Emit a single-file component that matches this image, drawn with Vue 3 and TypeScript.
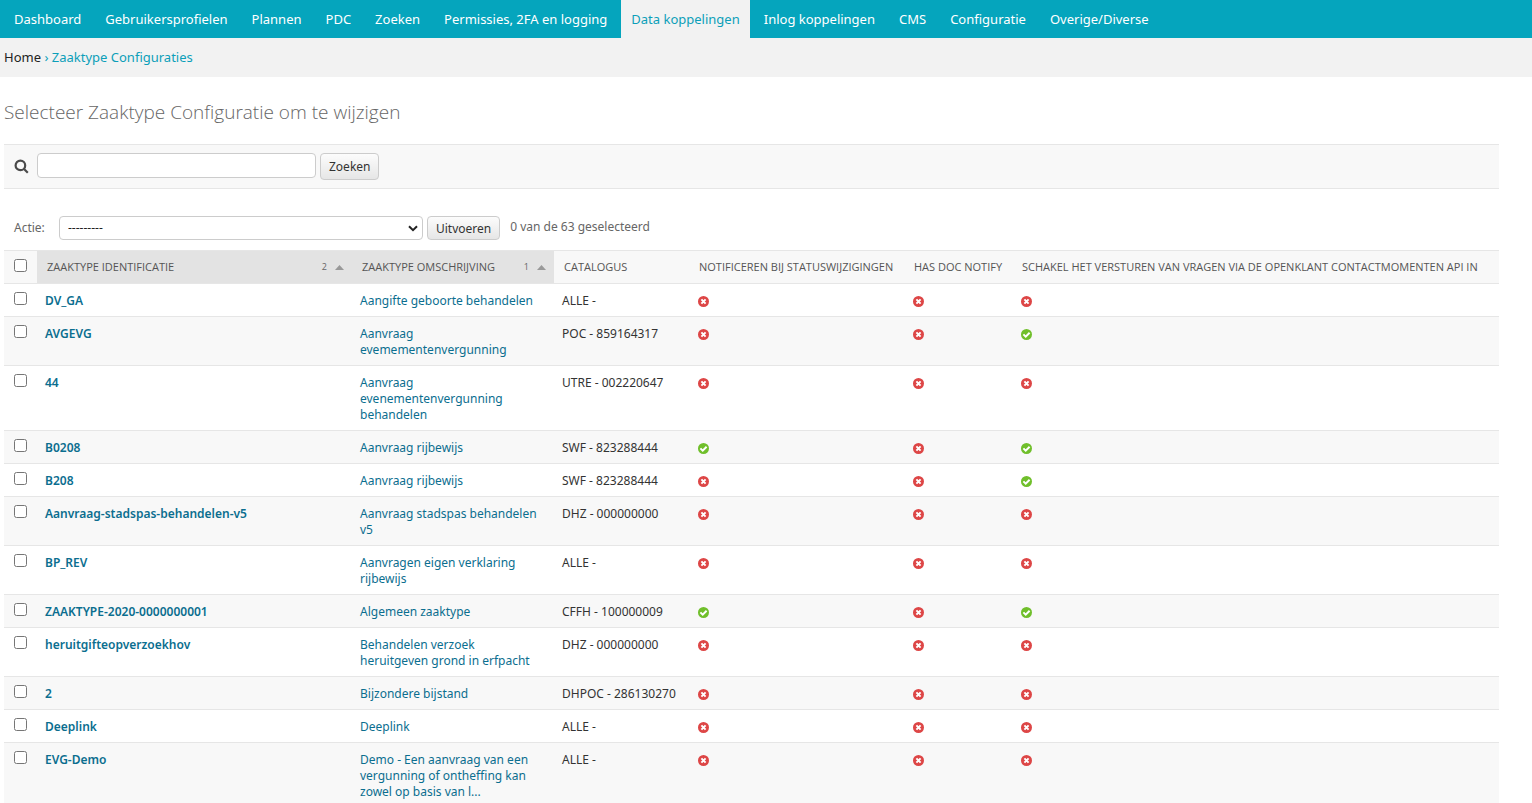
<script setup lang="ts">
import { computed, ref } from 'vue'

interface ZaaktypeRow {
  id: string
  description: string
  catalogus: string
  flags: [boolean, boolean, boolean]
}

const navItems: string[] = [
  'Dashboard',
  'Gebruikersprofielen',
  'Plannen',
  'PDC',
  'Zoeken',
  'Permissies, 2FA en logging',
  'Data koppelingen',
  'Inlog koppelingen',
  'CMS',
  'Configuratie',
  'Overige/Diverse',
]
const activeItem = 'Data koppelingen'

const flagColumns: string[] = [
  'Notificeren bij statuswijzigingen',
  'Has doc notify',
  'Schakel het versturen van vragen via de OpenKlant contactmomenten API in',
]

const rows: ZaaktypeRow[] = [
  { id: 'DV_GA', description: 'Aangifte geboorte behandelen', catalogus: 'ALLE -', flags: [false, false, false] },
  { id: 'AVGEVG', description: 'Aanvraag evemementenvergunning', catalogus: 'POC - 859164317', flags: [false, false, true] },
  { id: '44', description: 'Aanvraag evenementenvergunning behandelen', catalogus: 'UTRE - 002220647', flags: [false, false, false] },
  { id: 'B0208', description: 'Aanvraag rijbewijs', catalogus: 'SWF - 823288444', flags: [true, false, true] },
  { id: 'B208', description: 'Aanvraag rijbewijs', catalogus: 'SWF - 823288444', flags: [false, false, true] },
  { id: 'Aanvraag-stadspas-behandelen-v5', description: 'Aanvraag stadspas behandelen v5', catalogus: 'DHZ - 000000000', flags: [false, false, false] },
  { id: 'BP_REV', description: 'Aanvragen eigen verklaring rijbewijs', catalogus: 'ALLE -', flags: [false, false, false] },
  { id: 'ZAAKTYPE-2020-0000000001', description: 'Algemeen zaaktype', catalogus: 'CFFH - 100000009', flags: [true, false, true] },
  { id: 'heruitgifteopverzoekhov', description: 'Behandelen verzoek heruitgeven grond in erfpacht', catalogus: 'DHZ - 000000000', flags: [false, false, false] },
  { id: '2', description: 'Bijzondere bijstand', catalogus: 'DHPOC - 286130270', flags: [false, false, false] },
  { id: 'Deeplink', description: 'Deeplink', catalogus: 'ALLE -', flags: [false, false, false] },
  { id: 'EVG-Demo', description: 'Demo - Een aanvraag van een vergunning of ontheffing kan zowel op basis van l...', catalogus: 'ALLE -', flags: [false, false, false] },
]

const total = 63
const query = ref('')
const action = ref('')
const selected = ref<string[]>([])

const allSelected = computed<boolean>({
  get: () => selected.value.length === rows.length,
  set: (on) => {
    selected.value = on ? rows.map((row) => row.id) : []
  },
})
</script>

<template>
  <div class="page">
    <nav class="nav" aria-label="Hoofdmenu">
      <a v-for="item in navItems" :key="item" href="#" class="nav-link" :class="{ active: item === activeItem }">{{ item }}</a>
    </nav>

    <div class="breadcrumbs">
      <a href="#">Home</a> › Zaaktype Configuraties
    </div>

    <main class="content">
      <h1>Selecteer Zaaktype Configuratie om te wijzigen</h1>

      <form class="search" @submit.prevent>
        <label for="searchbar" aria-label="Zoeken">
          <svg class="search-icon" viewBox="0 0 15 15" aria-hidden="true">
            <circle cx="6.4" cy="6.4" r="4.8" />
            <path d="M9.8 9.8 L13.8 13.8" />
          </svg>
        </label>
        <input id="searchbar" v-model="query" type="text" />
        <button type="submit">Zoeken</button>
      </form>

      <form class="actions" @submit.prevent>
        <label for="action">Actie:</label>
        <div class="select-wrap">
          <select id="action" v-model="action">
            <option value="">---------</option>
          </select>
          <svg class="chevron" viewBox="0 0 10 7" aria-hidden="true"><path d="M1 1.2 L5 5.2 L9 1.2" /></svg>
        </div>
        <button type="submit">Uitvoeren</button>
        <span class="counter">{{ selected.length }} van de {{ total }} geselecteerd</span>
      </form>

      <table>
        <colgroup>
          <col class="c-check" />
          <col class="c-id" />
          <col class="c-desc" />
          <col class="c-cat" />
          <col class="c-status" />
          <col class="c-doc" />
          <col />
        </colgroup>
        <thead>
          <tr>
            <th class="check"><input v-model="allSelected" type="checkbox" aria-label="Alles selecteren" /></th>
            <th class="sorted">
              <div class="sort-head">
                <a href="#">Zaaktype identificatie</a>
                <span class="priority">2</span>
                <svg class="arrow" viewBox="0 0 9 5" aria-hidden="true"><path d="M0 5 L4.5 0 L9 5 Z" /></svg>
              </div>
            </th>
            <th class="sorted">
              <div class="sort-head">
                <a href="#">Zaaktype omschrijving</a>
                <span class="priority">1</span>
                <svg class="arrow" viewBox="0 0 9 5" aria-hidden="true"><path d="M0 5 L4.5 0 L9 5 Z" /></svg>
              </div>
            </th>
            <th><a href="#">Catalogus</a></th>
            <th v-for="column in flagColumns" :key="column"><a href="#">{{ column }}</a></th>
          </tr>
        </thead>
        <tbody>
          <tr v-for="row in rows" :key="row.id">
            <td class="check"><input v-model="selected" type="checkbox" :value="row.id" :aria-label="row.id" /></td>
            <th scope="row"><a href="#">{{ row.id }}</a></th>
            <td class="description"><a href="#">{{ row.description }}</a></td>
            <td>{{ row.catalogus }}</td>
            <td v-for="(flag, i) in row.flags" :key="i" class="flag-cell">
              <svg class="flag" viewBox="0 0 11 11" role="img" :aria-label="flag ? 'Ja' : 'Nee'">
                <circle cx="5.5" cy="5.5" r="5.5" :class="flag ? 'yes' : 'no'" />
                <path v-if="flag" d="M2.4 5.4 L4.7 7.6 L8.6 3.8" />
                <path v-else d="M3.4 3.4 L7.6 7.6 M7.6 3.4 L3.4 7.6" />
              </svg>
            </td>
          </tr>
        </tbody>
      </table>
    </main>
  </div>
</template>

<style>
body {
  margin: 0;
  background: #fff;
}
</style>

<style scoped>
.page {
  height: 100vh;
  overflow: hidden;
  font-family: "Segoe UI", "Noto Sans", "Open Sans", sans-serif;
  font-size: 12px;
  line-height: 16px;
  color: #333;
}
a {
  text-decoration: none;
  color: #0b6e8f;
}
.nav {
  display: flex;
  gap: 4px;
  padding: 0 4px;
  background: #05a5bd;
}
.nav-link {
  padding: 0 10px;
  font-size: 13px;
  line-height: 38px;
  color: #fff;
  white-space: nowrap;
}
.nav-link.active {
  background: #f2f2f2;
  color: #0c9fb9;
}
.breadcrumbs {
  padding: 0 4px;
  font-size: 13px;
  line-height: 39px;
  background: #f2f2f2;
  color: #0c9fb9;
}
.breadcrumbs a {
  color: #222;
}
.content {
  padding: 0 33px 0 4px;
}
h1 {
  margin: 0;
  padding: 23px 0 20px;
  font-family: "Segoe UI", "Open Sans", sans-serif;
  font-size: 19px;
  font-weight: 300;
  line-height: 24px;
  color: #666;
}
.search {
  display: flex;
  align-items: center;
  gap: 4px;
  padding: 8px 10px;
  border: solid #e6e6e6;
  border-width: 1px 0;
  background: #f8f8f8;
}
.search label {
  display: flex;
  margin-right: 4px;
}
.search-icon {
  width: 15px;
  height: 15px;
  fill: none;
  stroke: #4a4a4a;
  stroke-width: 2.2;
}
.search input {
  box-sizing: border-box;
  width: 279px;
  height: 25px;
  margin-bottom: 2px;
  padding: 0 8px;
  border: 1px solid #ccc;
  border-radius: 4px;
  font: inherit;
  background: #fff;
}
button {
  padding: 1px 8px 0;
  border: 1px solid #ccc;
  border-radius: 4px;
  font-family: inherit;
  font-size: 12px;
  line-height: 24px;
  color: #333;
  background: linear-gradient(#fcfcfc, #e6e6e6);
}
.actions {
  display: flex;
  align-items: center;
  gap: 4px;
  padding: 27px 10px 10px;
  color: #666;
}
.actions label {
  width: 41px;
}
.actions button {
  line-height: 21px;
}
.select-wrap {
  position: relative;
}
.select-wrap select {
  display: block;
  appearance: none;
  box-sizing: border-box;
  width: 364px;
  height: 24px;
  padding: 0 8px;
  border: 1px solid #ccc;
  border-radius: 4px;
  font: inherit;
  color: #222;
  background: #fff;
}
.chevron {
  position: absolute;
  top: 9px;
  right: 5px;
  width: 10px;
  height: 7px;
  fill: none;
  stroke: #222;
  stroke-width: 2;
  pointer-events: none;
}
.counter {
  margin: 0 0 2px 6px;
}
table {
  width: 100%;
  table-layout: fixed;
  border-collapse: collapse;
}
.c-check { width: 33px; }
.c-id { width: 315px; }
.c-desc { width: 202px; }
.c-cat { width: 135px; }
.c-status { width: 215px; }
.c-doc { width: 108px; }
th,
td {
  padding: 9px 8px 7px;
  border-bottom: 1px solid #e6e6e6;
  text-align: left;
  vertical-align: top;
}
thead th {
  padding: 8px 10px;
  border-top: 1px solid #e6e6e6;
  background: #f8f8f8;
  font-family: "Segoe UI", "Open Sans", sans-serif;
  font-size: 11px;
  font-weight: 400;
  text-transform: uppercase;
  white-space: nowrap;
}
thead a {
  color: #555;
}
thead .sorted {
  padding-right: 8px;
  background: #e3e3e3;
}
.sort-head {
  display: flex;
  align-items: center;
}
.priority {
  margin: 0 8px 0 auto;
  font-size: 9px;
  color: #666;
}
.arrow {
  width: 9px;
  height: 5px;
  fill: #999;
}
thead .check,
.check {
  padding: 8px 10px 0;
}
.check input {
  display: block;
  width: 13px;
  height: 13px;
  margin: 0;
}
tbody tr:nth-child(even) {
  background: #f8f8f8;
}
tbody th {
  font-weight: 600;
}
.description {
  padding-right: 12px;
}
.flag-cell {
  padding-left: 9px;
}
.flag {
  display: block;
  width: 11px;
  height: 11px;
  margin-top: 3px;
  fill: none;
  stroke: #fff;
  stroke-width: 2;
}
.flag circle {
  stroke: none;
}
.yes {
  fill: #70bf2b;
}
.no {
  fill: #dd4646;
}
</style>
